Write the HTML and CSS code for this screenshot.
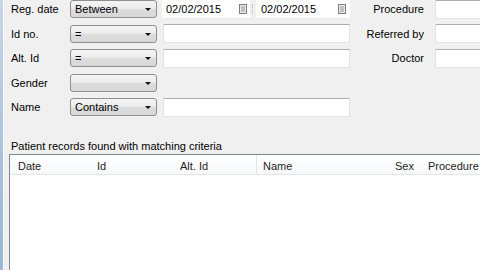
FILE: index.html
```html
<!DOCTYPE html>
<html>
<head>
<meta charset="utf-8">
<link rel="stylesheet" href="styles.css">
</head>
<body>
<div class="window">
  <div class="frame"></div>
  <div class="content">
    <div class="form">
      <div class="lbl">Reg. date</div>
      <div class="combo"><span>Between</span><span class="arrow"></span></div>
      <div class="dates">
        <div class="date d1"><span>02/02/2015</span><svg class="cal" width="8" height="10" viewBox="0 0 8 10"><rect x="0.5" y="0.5" width="7" height="9" fill="#e8e8e8" stroke="#808080"/><line x1="2" y1="3" x2="6" y2="3" stroke="#9a9a9a"/><line x1="2" y1="5" x2="6" y2="5" stroke="#9a9a9a"/><line x1="2" y1="7" x2="6" y2="7" stroke="#9a9a9a"/></svg></div>
        <div class="dsep"></div>
        <div class="date d2"><span>02/02/2015</span><svg class="cal" width="8" height="10" viewBox="0 0 8 10"><rect x="0.5" y="0.5" width="7" height="9" fill="#e8e8e8" stroke="#808080"/><line x1="2" y1="3" x2="6" y2="3" stroke="#9a9a9a"/><line x1="2" y1="5" x2="6" y2="5" stroke="#9a9a9a"/><line x1="2" y1="7" x2="6" y2="7" stroke="#9a9a9a"/></svg></div>
      </div>
      <div class="rlbl">Procedure</div>
      <div class="field rfield"></div>

      <div class="lbl">Id no.</div>
      <div class="combo"><span>=</span><span class="arrow"></span></div>
      <div class="field"></div>
      <div class="rlbl">Referred by</div>
      <div class="field rfield"></div>

      <div class="lbl">Alt. Id</div>
      <div class="combo"><span>=</span><span class="arrow"></span></div>
      <div class="field"></div>
      <div class="rlbl">Doctor</div>
      <div class="field rfield"></div>

      <div class="lbl">Gender</div>
      <div class="combo"><span></span><span class="arrow"></span></div>
      <div></div><div></div><div></div>

      <div class="lbl">Name</div>
      <div class="combo"><span>Contains</span><span class="arrow"></span></div>
      <div class="field"></div>
      <div></div><div></div>
    </div>
    <div class="results-title">Patient records found with matching criteria</div>
    <div class="list">
      <div class="list-head">
        <div class="col c-date">Date</div>
        <div class="col c-id">Id</div>
        <div class="col c-alt">Alt. Id</div>
        <div class="col c-name">Name</div>
        <div class="col c-sex">Sex</div>
        <div class="col c-proc">Procedure</div>
      </div>
      <div class="list-body"></div>
    </div>
  </div>
</div>
</body>
</html>
```
FILE: styles.css
```css
html, body {
  margin: 0;
  padding: 0;
  width: 480px;
  height: 270px;
  overflow: hidden;
  background: #f0f0f0;
  font-family: "Liberation Sans", Arial, sans-serif;
  font-size: 11px;
  color: #000;
}
.window {
  display: flex;
  width: 480px;
  height: 270px;
}
.frame {
  width: 3px;
  flex: none;
  background: linear-gradient(#c9d6e6, #a9c0dc 60%, #9cb6d6);
  border-right: 1px solid #fafafa;
}
.content {
  flex: 1;
  min-width: 0;
  overflow: hidden;
}
.form {
  display: grid;
  grid-template-columns: 59px 93px 187px 85px 60px;
  grid-auto-rows: 24.5px;
  margin-top: -3px;
  padding-left: 7px;
  align-items: center;
}
.lbl {
  white-space: nowrap;
}
.rlbl {
  text-align: right;
  padding-right: 11px;
  white-space: nowrap;
}
.combo {
  width: 87px;
  height: 18px;
  box-sizing: border-box;
  border: 1px solid #8e8f8f;
  border-radius: 3px;
  background: linear-gradient(#f4f4f4 0%, #ececec 45%, #dcdcdc 55%, #d8d8d8 100%);
  display: flex;
  align-items: center;
  justify-content: space-between;
  padding: 0 5px 0 4px;
}
.arrow {
  width: 0;
  height: 0;
  border-left: 3px solid transparent;
  border-right: 3px solid transparent;
  border-top: 3px solid #111;
  margin-top: 1px;
}
.field {
  height: 19px;
  box-sizing: border-box;
  background: #fff;
  border: 1px solid #e2e3ea;
  border-top-color: #abadb3;
}
.rfield {
  width: 60px;
  border-right: none;
}
.dates {
  display: flex;
  align-items: center;
  margin-left: -1px;
  height: 19px;
}
.date {
  height: 19px;
  box-sizing: border-box;
  background: #fff;
  border-bottom: 1px solid #e8e8e8;
  display: flex;
  align-items: center;
  justify-content: space-between;
  padding: 0 3px 0 4px;
}
.d1 { width: 88px; }
.d2 { width: 94px; padding-left: 5px; padding-right: 4px; }
.dsep {
  width: 6px;
  height: 10px;
  box-sizing: border-box;
  border-left: 1px dotted #b0b0b0;
  margin-left: 2px;
  margin-right: -2px;
}
.cal {
  display: block;
}
.results-title {
  margin-top: 19px;
  padding-left: 7px;
  height: 14px;
  line-height: 14px;
}
.list {
  margin-top: 1.5px;
  margin-left: 5px;
  height: 120px;
  border: 1px solid #828790;
  border-right: none;
  background: #fff;
}
.list-head {
  position: relative;
  height: 20px;
  box-sizing: border-box;
  border-bottom: 1px solid #e5e5e5;
  background: linear-gradient(#ffffff, #f7f8fa);
}
.col {
  position: absolute;
  top: 3px;
  line-height: 16px;
  white-space: nowrap;
  color: #1e1e1e;
}
.c-date { left: 8px; }
.c-id { left: 87px; }
.c-alt { left: 170px; }
.c-name { left: 253px; }
.c-name::before {
  content: "";
  position: absolute;
  left: -7px;
  top: -3px;
  height: 19px;
  border-left: 1px solid #e3e5e8;
}
.c-sex { left: 385px; }
.c-proc { left: 418px; }
```
